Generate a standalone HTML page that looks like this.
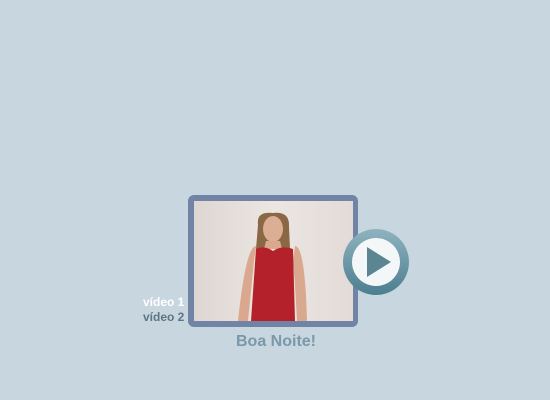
<!DOCTYPE html>
<html><head><style>
body{margin:0;width:550px;height:400px;background:#c8d6df;position:relative;overflow:hidden;font-family:"Liberation Sans",sans-serif}
.frame{position:absolute;left:188px;top:195px;width:170px;height:132px;background:#7284a6;border-radius:6px}
.photo{position:absolute;left:194px;top:201px;width:159px;height:120px;background:linear-gradient(90deg,#ddd6d3,#ece6e3 50%,#e2dbd8);overflow:hidden}
.t{position:absolute;font-weight:bold;font-size:12px}
</style></head><body>
<div class="frame"></div>
<div class="photo">
<svg width="159" height="120" viewBox="0 0 159 120">
<path d="M62 45 Q52 45 44 120 L54 120 Q58 80 60 60Z" fill="#d9a88e"/>
<path d="M101 45 Q111 45 113 120 L103 120 Q101 80 99 60Z" fill="#d9a88e"/>
<path d="M64 24 Q62 10 79 12 Q96 10 95 26 L96 48 L62 48Z" fill="#8a6745"/>
<ellipse cx="79" cy="28" rx="10" ry="13" fill="#dcae94"/>
<path d="M72 40 L86 40 L88 48 L70 48Z" fill="#d9a88e"/>
<path d="M62 48 Q70 44 79 50 Q88 44 99 48 L101 120 L57 120Z" fill="#b4212b"/>
</svg>
</div>
<svg style="position:absolute;left:342px;top:228px" width="68" height="68" viewBox="0 0 68 68">
<defs><linearGradient id="g" x1="0" y1="0" x2="0" y2="1"><stop offset="0" stop-color="#8fb3bf"/><stop offset="1" stop-color="#4d7e8f"/></linearGradient></defs>
<circle cx="34" cy="34" r="33" fill="url(#g)"/>
<circle cx="34" cy="34" r="24" fill="#f4f7f8"/>
<path d="M25 19 L49 34 L25 49Z" fill="#5c8594"/>
</svg>
<div class="t" style="left:143px;top:295px;color:#fff">vídeo 1</div>
<div class="t" style="left:143px;top:310px;color:#5e7584">vídeo 2</div>
<div class="t" style="left:236px;top:333px;font-size:16px;color:#7a98aa">Boa Noite!</div>
</body></html>
